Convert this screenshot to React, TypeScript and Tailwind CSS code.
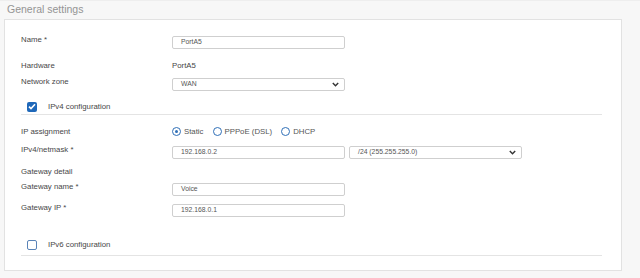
import { ReactNode } from "react";

const font = { fontFamily: '"Liberation Sans", Arial, sans-serif' };

function Chevron() {
  return (
    <svg width="7" height="5" viewBox="0 0 7 5" className="shrink-0">
      <path d="M0.8 1 L3.5 3.8 L6.2 1" fill="none" stroke="#333" strokeWidth="1.4" />
    </svg>
  );
}

function Input({ value, w = "w-[173px]" }: { value: string; w?: string }) {
  return (
    <div
      className={`${w} h-[13px] border border-[#cfcfcf] rounded-[2px] bg-white flex items-center pl-[8px] text-[6.8px] text-[#555]`}
    >
      {value}
    </div>
  );
}

function Select({ value, w = "w-[173px]" }: { value: string; w?: string }) {
  return (
    <div
      className={`${w} h-[13px] border border-[#cfcfcf] rounded-[2px] bg-white flex items-center justify-between pl-[8px] pr-[5px] text-[6.8px] text-[#555]`}
    >
      <span>{value}</span>
      <Chevron />
    </div>
  );
}

function Row({ label, mt, children }: { label: string; mt: string; children?: ReactNode }) {
  return (
    <div className={`flex items-start h-[13px] ${mt}`}>
      <div className="w-[151px] shrink-0 text-[7.8px] leading-[7px] text-[#474747]">{label}</div>
      {children}
    </div>
  );
}

function Radio({ label, checked }: { label: string; checked?: boolean }) {
  return (
    <div className="flex items-center gap-[3px]">
      <div className="w-[9px] h-[9px] rounded-full border-[1.3px] border-[#2f6fb7] flex items-center justify-center">
        {checked && <div className="w-[3.5px] h-[3.5px] rounded-full bg-[#2f6fb7]" />}
      </div>
      <span className="text-[7.8px] text-[#555]">{label}</span>
    </div>
  );
}

function Check({ label, checked, mt }: { label: string; checked?: boolean; mt: string }) {
  return (
    <div className={`flex items-center h-[11px] pl-[6px] gap-[11px] ${mt}`}>
      {checked ? (
        <div className="w-[10px] h-[10px] rounded-[2px] bg-[#1f68b9] flex items-center justify-center">
          <svg width="8" height="7" viewBox="0 0 8 7">
            <path d="M1 3.6 L3 5.6 L7 1.3" fill="none" stroke="white" strokeWidth="1.6" />
          </svg>
        </div>
      ) : (
        <div className="w-[10px] h-[10px] rounded-[2px] border border-[#5a84b8] bg-white" />
      )}
      <span className="text-[7.8px] text-[#474747]">{label}</span>
    </div>
  );
}

export default function App() {
  return (
    <div className="w-[640px] h-[278px] bg-[#f7f7f7] overflow-hidden border-t border-[#eeeeee]" style={font}>
      <div className="h-[18px] pl-[7px] flex items-center text-[10.5px] text-[#949494]">General settings</div>
      <div className="ml-[4px] w-[618px] h-[252px] bg-white border border-[#e2e2e2] pl-[16px] pr-[19px] flex flex-col">
        <Row label="Name *" mt="mt-[16px]">
          <Input value="PortA5" />
        </Row>
        <div className="flex items-center h-[13px] mt-[10px]">
          <div className="w-[151px] shrink-0 text-[7.8px] text-[#474747]">Hardware</div>
          <div className="text-[7.8px] text-[#444]">PortA5</div>
        </div>
        <Row label="Network zone" mt="mt-[6px]">
          <Select value="WAN" />
        </Row>
        <Check label="IPv4 configuration" checked mt="mt-[10px]" />
        <div className="mt-[2px] border-t border-[#e4e4e4]" />
        <div className="flex items-center h-[13px] mt-[10px]">
          <div className="w-[151px] shrink-0 text-[7.8px] text-[#474747]">IP assignment</div>
          <div className="flex items-center gap-[9px]">
            <Radio label="Static" checked />
            <Radio label="PPPoE (DSL)" />
            <Radio label="DHCP" />
          </div>
        </div>
        <Row label="IPv4/netmask *" mt="mt-[8px]">
          <div className="flex gap-[4px]">
            <Input value="192.168.0.2" />
            <Select value="/24 (255.255.255.0)" w="w-[173px]" />
          </div>
        </Row>
        <div className="flex items-center h-[13px] mt-[6px] text-[7.8px] text-[#474747]">Gateway detail</div>
        <Row label="Gateway name *" mt="mt-[5px]">
          <Input value="Voice" />
        </Row>
        <Row label="Gateway IP *" mt="mt-[8px]">
          <Input value="192.168.0.1" />
        </Row>
        <Check label="IPv6 configuration" mt="mt-[22px]" />
        <div className="mt-[5px] border-t border-[#e4e4e4]" />
      </div>
    </div>
  );
}
